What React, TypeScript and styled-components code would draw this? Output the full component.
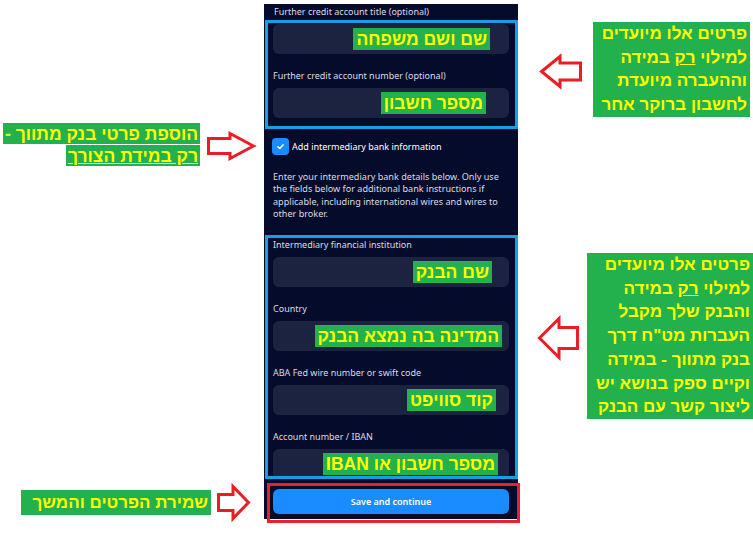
import React from "react";
import styled, { createGlobalStyle } from "styled-components";

const Global = createGlobalStyle`
  html, body { margin: 0; padding: 0; background: #ffffff; }
  body { width: 753px; height: 535px; overflow: hidden; font-family: "Noto Sans", sans-serif; }
  * { box-sizing: border-box; }
`;

const Stage = styled.div`
  position: relative;
  width: 753px;
  height: 535px;
  display: grid;
  grid-template-columns: 264px 254px 1fr;
  align-items: start;
`;

const Gutter = styled.div``;

const Panel = styled.section`
  margin-top: 4px;
  background: #050b2b;
  display: flex;
  flex-direction: column;
  padding: 2px 0 5px 1px;
`;

const Label = styled.div<{ $outer?: boolean }>`
  font-size: 9px;
  line-height: 12px;
  height: 12px;
  color: #d9dce6;
  white-space: nowrap;
  margin: ${(p) => (p.$outer ? "0 0 2px 9px" : "0 0 6px")};
`;

const Marked = styled.div<{ $height: number }>`
  border: 3px solid #16a0e4;
  padding: 1px 6px 8px 5px;
  height: ${(p) => p.$height}px;
  overflow: hidden;
  display: flex;
  flex-direction: column;
`;

const Field = styled.div<{ $first?: boolean }>`
  display: flex;
  flex-direction: column;
  margin-top: ${(p) => (p.$first ? 0 : 16)}px;
`;

const Input = styled.div<{ $gap: number }>`
  height: 30px;
  flex: none;
  border-radius: 6px;
  background: #1c2340;
  display: flex;
  align-items: center;
  justify-content: flex-end;
  padding-right: ${(p) => p.$gap}px;
`;

const Highlight = styled.span`
  direction: rtl;
  background: #22b14c;
  color: #ffff00;
  font-family: "Liberation Sans", "DejaVu Sans", sans-serif;
  font-weight: 700;
  font-size: 17.5px;
  line-height: 22px;
  padding: 0 3px;
  white-space: nowrap;
`;

const CheckRow = styled.label`
  display: flex;
  align-items: center;
  gap: 3px;
  margin: 9px 0 0 7px;
  height: 17px;
  color: #ffffff;
  font-size: 9px;
`;

const CheckBox = styled.span`
  width: 17px;
  height: 17px;
  border-radius: 4px;
  background: #1a8cff;
  display: flex;
  align-items: center;
  justify-content: center;
`;

const Note = styled.p`
  margin: 16px 8px 14px 8px;
  font-size: 9.1px;
  line-height: 12.4px;
  color: #d9dce6;
`;

const ButtonZone = styled.div`
  position: relative;
  margin: 10px 9px 0 8px;
`;

const SaveButton = styled.button`
  width: 100%;
  height: 25px;
  border: 0;
  border-radius: 6px;
  background: #1a8cff;
  color: #ffffff;
  font-family: "Noto Sans", sans-serif;
  font-size: 9px;
  font-weight: 600;
  display: block;
`;

const RedFrame = styled.div`
  position: absolute;
  left: -6px;
  right: -11px;
  top: -6px;
  bottom: -9px;
  border: 3px solid #e8202a;
  pointer-events: none;
`;

const Callout = styled.div<{ $top: number; $left?: number; $right?: number; $width?: number; $size: number; $line: number; $block?: boolean }>`
  position: absolute;
  top: ${(p) => p.$top}px;
  ${(p) => (p.$left !== undefined ? `left: ${p.$left}px;` : "")}
  ${(p) => (p.$right !== undefined ? `right: ${p.$right}px;` : "")}
  ${(p) => (p.$width ? `width: ${p.$width}px;` : "")}
  direction: rtl;
  text-align: right;
  font-family: "Liberation Sans", "DejaVu Sans", sans-serif;
  font-weight: 700;
  font-size: ${(p) => p.$size}px;
  line-height: ${(p) => p.$line}px;
  color: #ffff00;
  white-space: nowrap;
  ${(p) => (p.$block ? "background: #22b14c; padding: 0 3px;" : "")}
`;

const Mark = styled.span`
  background: #22b14c;
  box-decoration-break: clone;
  -webkit-box-decoration-break: clone;
  padding: 1px 2px 0;
`;

const ArrowSvg = styled.svg<{ $top: number; $left: number }>`
  position: absolute;
  top: ${(p) => p.$top}px;
  left: ${(p) => p.$left}px;
  overflow: visible;
`;

type ArrowProps = { top: number; left: number; w: number; h: number; head: number; shaft: number; dir: "left" | "right" };

function Arrow({ top, left, w, h, head, shaft, dir }: ArrowProps) {
  const s = 1.5;
  const y1 = (h - shaft) / 2;
  const y2 = (h + shaft) / 2;
  const hx = w - head;
  const pts = [
    [s, y1],
    [hx, y1],
    [hx, s],
    [w - s, h / 2],
    [hx, h - s],
    [hx, y2],
    [s, y2],
  ]
    .map(([x, y]) => `${dir === "right" ? x : w - x},${y}`)
    .join(" ");
  return (
    <ArrowSvg $top={top} $left={left} width={w} height={h} viewBox={`0 0 ${w} ${h}`}>
      <polygon points={pts} fill="#ffffff" stroke="#ec1c24" strokeWidth={3} strokeLinejoin="miter" />
    </ArrowSvg>
  );
}

type F = { label: string; mark: string; gap: number };

const creditFields: F[] = [
  { label: "Further credit account number (optional)", mark: "מספר חשבון", gap: 23 },
];

const bankFields: F[] = [
  { label: "Intermediary financial institution", mark: "שם הבנק", gap: 17 },
  { label: "Country", mark: "המדינה בה נמצא הבנק", gap: 7 },
  { label: "ABA Fed wire number or swift code", mark: "קוד סוויפט", gap: 13 },
  { label: "Account number / IBAN", mark: "מספר חשבון או IBAN", gap: 11 },
];

export default function App() {
  return (
    <>
      <Global />
      <Stage>
        <Gutter />
        <Panel>
          <Label $outer>Further credit account title (optional)</Label>
          <Marked $height={109}>
            <Field $first>
              <Input $gap={19}>
                <Highlight>שם ושם משפחה</Highlight>
              </Input>
            </Field>
            {creditFields.map((f) => (
              <Field key={f.label}>
                <Label>{f.label}</Label>
                <Input $gap={f.gap}>
                  <Highlight>{f.mark}</Highlight>
                </Input>
              </Field>
            ))}
          </Marked>
          <CheckRow>
            <CheckBox>
              <svg width="9" height="9" viewBox="0 0 10 10">
                <path d="M2 5.2 L4.2 7.2 L8 3" fill="none" stroke="#ffffff" strokeWidth="1.6" strokeLinecap="round" strokeLinejoin="round" />
              </svg>
            </CheckBox>
            Add intermediary bank information
          </CheckRow>
          <Note>
            Enter your intermediary bank details below. Only use the fields below for additional bank instructions if
            applicable, including international wires and wires to other broker.
          </Note>
          <Marked $height={244}>
            {bankFields.map((f, i) => (
              <Field key={f.label} $first={i === 0}>
                <Label>{f.label}</Label>
                <Input $gap={f.gap}>
                  <Highlight>{f.mark}</Highlight>
                </Input>
              </Field>
            ))}
          </Marked>
          <ButtonZone>
            <SaveButton>Save and continue</SaveButton>
            <RedFrame />
          </ButtonZone>
        </Panel>
        <Gutter />

        <Callout $top={123} $right={553} $size={17.5} $line={22} >
          <Mark>הוספת פרטי בנק מתווך -</Mark>
          <br />
          <Mark>
            <u>רק במידת הצורך</u>
          </Mark>
        </Callout>
        <Arrow top={132} left={207} w={48} h={28} head={25} shaft={15} dir="right" />

        <Callout $top={22} $left={593} $width={157} $size={17} $line={23.7} $block>
          פרטים אלו מיועדים
          <br />
          למילוי <u>רק</u> במידה
          <br />
          וההעברה מיועדת
          <br />
          לחשבון ברוקר אחר
        </Callout>
        <Arrow top={55} left={540} w={42} h={33} head={20} shaft={17} dir="left" />

        <Callout $top={253} $left={587} $width={166} $size={17} $line={23.7} $block>
          פרטים אלו מיועדים
          <br />
          למילוי <u>רק</u> במידה
          <br />
          והבנק שלך מקבל
          <br />
          העברות מט"ח דרך
          <br />
          בנק מתווך - במידה
          <br />
          וקיים ספק בנושא יש
          <br />
          ליצור קשר עם הבנק
        </Callout>
        <Arrow top={317} left={538} w={41} h={42} head={21} shaft={21} dir="left" />

        <Callout $top={490} $left={21} $width={190} $size={17} $line={25} $block>
          שמירת הפרטים והמשך
        </Callout>
        <Arrow top={485} left={217} w={33} h={35} head={17} shaft={16} dir="right" />
      </Stage>
    </>
  );
}
